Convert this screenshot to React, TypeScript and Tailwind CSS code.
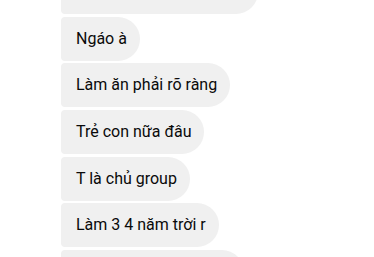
const messages = [
  'Mày nghĩ t dễ bị lừa lắm',
  'Ngáo à',
  'Làm ăn phải rõ ràng',
  'Trẻ con nữa đâu',
  'T là chủ group',
  'Làm 3 4 năm trời r',
  'Không nói nhiều nữa r',
]

export default function App() {
  return (
    <div className="h-[257px] w-[374px] overflow-hidden bg-white font-['Roboto',sans-serif]">
      <div className="-mt-[30px] flex flex-col items-start gap-[2.7px] pl-[61px]">
        {messages.map((m, i) => (
          <div
            key={i}
            className="h-[44px] flex items-center whitespace-nowrap rounded-l-[4px] rounded-r-[22px] bg-[#f0f0f0] pl-[15px] pr-[13px] text-[16px] leading-[22px] text-[#0a0a0a]"
          >
            {m}
          </div>
        ))}
      </div>
    </div>
  )
}
